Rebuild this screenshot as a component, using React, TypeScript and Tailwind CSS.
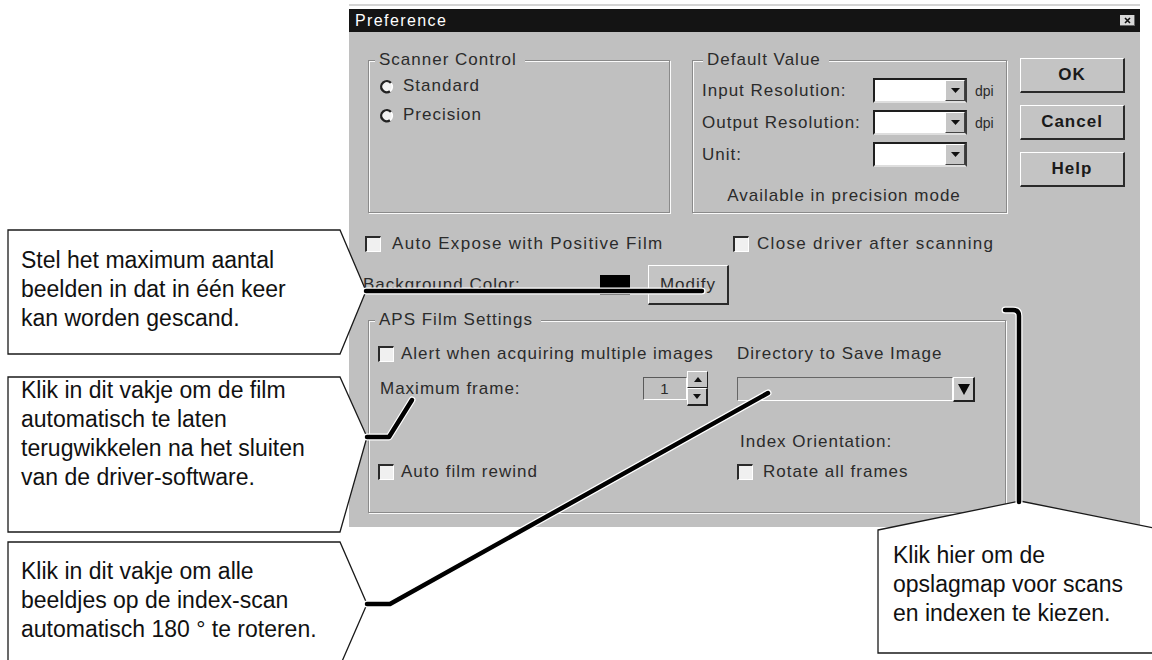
import React from "react";

function Check() {
    return (
        <span className="inline-block w-[16px] h-[16px] shrink-0 bg-[#f0f0f0] border-t-2 border-l-2 border-r border-b border-t-[#2a2a2a] border-l-[#2a2a2a] border-r-white border-b-white" />
    );
}

function Radio() {
    return (
        <svg width="15" height="15" viewBox="0 0 15 15" className="shrink-0">
            <circle cx="7.5" cy="7.5" r="6" fill="#f2f2f2" />
            <path d="M12 4 A5.6 5.6 0 1 0 11 12.3" stroke="#222" strokeWidth="2.4" fill="none" />
            <path d="M11 12.3 A5.6 5.6 0 0 0 12 4" stroke="#ffffff" strokeWidth="1.5" fill="none" />
        </svg>
    );
}

function Group({ label, labelLeft, className, children }: { label: string; labelLeft: string; className: string; children?: React.ReactNode }) {
    return (
        <div className={`relative border border-[#8a8a8a] shadow-[inset_1px_1px_0_#fafafa,1px_1px_0_#fafafa] ${className}`}>
            <span className={`absolute -top-[11px] ${labelLeft} bg-[#c0c0c0] pl-[4px] pr-[8px] leading-[20px] whitespace-nowrap`}>
                {label}
            </span>
            {children}
        </div>
    );
}

function Combo() {
    return (
        <div className="w-[94px] h-[25px] flex bg-white border-2 border-t-[#1e1e1e] border-l-[#1e1e1e] border-r-[#3a3a3a] border-b-[#dedede]">
            <div className="flex-1" />
            <div className="w-[20px] h-full bg-[#c6c6c6] border-t border-l border-t-white border-l-white border-r border-b border-r-[#444] border-b-[#444] flex items-center justify-center">
                <svg width="9" height="5" viewBox="0 0 9 5">
                    <polygon points="0,0 9,0 4.5,5" fill="#111" />
                </svg>
            </div>
        </div>
    );
}

function Btn({ children, className }: { children: React.ReactNode; className: string }) {
    return (
        <div className={`flex items-center justify-center bg-[#c4c4c4] border-t border-l border-t-white border-l-white border-r-2 border-b-2 border-r-[#2a2a2a] border-b-[#2a2a2a] ${className}`}>
            {children}
        </div>
    );
}

function Spin() {
    return (
        <div className="flex items-center">
            <div className="w-[44px] h-[23px] flex items-center justify-center text-[15px] border-t border-l border-t-[#5a5a5a] border-l-[#5a5a5a] border-r border-b border-r-white border-b-white">
                1
            </div>
            <div className="w-[21px] flex flex-col">
                <div className="h-[17px] flex items-center justify-center bg-[#c4c4c4] border-t border-l border-t-white border-l-white border-r border-b border-r-[#222] border-b-[#222]">
                    <svg width="8" height="5" viewBox="0 0 8 5">
                        <polygon points="0,5 8,5 4,0" fill="#111" />
                    </svg>
                </div>
                <div className="h-[18px] flex items-center justify-center bg-[#c4c4c4] border-t border-l border-t-white border-l-white border-r-2 border-b-2 border-r-[#222] border-b-[#222]">
                    <svg width="8" height="5" viewBox="0 0 8 5">
                        <polygon points="0,0 8,0 4,5" fill="#111" />
                    </svg>
                </div>
            </div>
        </div>
    );
}

function Dialog() {
    return (
        <div className="ml-[349px] pt-[4px] w-[791px]">
            <div className="h-[2px] bg-[#d4d4d4]" />
            <div className="h-[3px]" />
            <div className="h-[23px] bg-[#141414] flex items-center justify-between pl-[6px] pr-[5px]">
                <span className="text-white text-[16px] tracking-[1.4px]">Preference</span>
                <div className="w-[15px] h-[11px] bg-[#d8d8d8] border-r border-b border-[#666] flex items-center justify-center">
                    <svg width="7" height="7" viewBox="0 0 7 7">
                        <path d="M1 1 L6 6 M6 1 L1 6" stroke="#111" strokeWidth="1.6" />
                    </svg>
                </div>
            </div>

            <div className="h-[495px] bg-[#c0c0c0] pl-[16px] pt-[28px] text-[17px] leading-[20px] tracking-[1px] text-[#2b2b2b]">
                {/* top row */}
                <div className="ml-[3px] flex items-start">
                    <Group label="Scanner Control" labelLeft="left-[6px]" className="w-[302px] h-[153px] pt-[15px] pl-[10px]">
                        <div className="h-[20px] flex items-center gap-[9px]">
                            <Radio />
                            Standard
                        </div>
                        <div className="mt-[9px] h-[20px] flex items-center gap-[9px]">
                            <Radio />
                            Precision
                        </div>
                    </Group>

                    <Group label="Default Value" labelLeft="left-[10px]" className="ml-[22px] w-[315px] h-[153px] pt-[17px] pl-[9px]">
                        <div className="h-[25px] flex items-center">
                            <span className="w-[171px] whitespace-nowrap">Input Resolution:</span>
                            <Combo />
                            <span className="ml-[8px] text-[14px] tracking-normal">dpi</span>
                        </div>
                        <div className="mt-[7px] h-[25px] flex items-center">
                            <span className="w-[171px] whitespace-nowrap">Output Resolution:</span>
                            <Combo />
                            <span className="ml-[8px] text-[14px] tracking-normal">dpi</span>
                        </div>
                        <div className="mt-[7px] h-[25px] flex items-center">
                            <span className="w-[171px]">Unit:</span>
                            <Combo />
                        </div>
                        <div className="mt-[19px] w-[284px] text-center whitespace-nowrap">Available in precision mode</div>
                    </Group>

                    <div className="ml-[13px] -mt-[2px] w-[105px] flex flex-col gap-[12px] font-bold text-[#1a1a1a]">
                        <Btn className="h-[35px]">OK</Btn>
                        <Btn className="h-[35px]">Cancel</Btn>
                        <Btn className="h-[35px]">Help</Btn>
                    </div>
                </div>

                {/* checkboxes */}
                <div className="mt-[21px] h-[20px] flex items-center">
                    <div className="w-[368px] flex items-center gap-[11px] whitespace-nowrap tracking-[1.3px]">
                        <Check />
                        Auto Expose with Positive Film
                    </div>
                    <div className="flex items-center gap-[8px] whitespace-nowrap tracking-[1.3px]">
                        <Check />
                        Close driver after scanning
                    </div>
                </div>

                {/* background colour */}
                <div className="mt-[11px] h-[40px] flex items-center">
                    <span className="-ml-[2px] w-[237px] whitespace-nowrap">Background Color:</span>
                    <span className="w-[30px] h-[20px] bg-black" />
                    <Btn className="ml-[18px] w-[81px] h-[40px]">Modify</Btn>
                </div>

                {/* APS */}
                <Group label="APS Film Settings" labelLeft="left-[6px]" className="mt-[15px] ml-[3px] w-[638px] h-[193px] flex pt-[23px] pl-[9px]">
                    <div className="w-[359px] flex flex-col">
                        <div className="h-[20px] flex items-center gap-[7px] whitespace-nowrap">
                            <Check />
                            Alert when acquiring multiple images
                        </div>
                        <div className="mt-[7px] h-[35px] flex items-center">
                            <span className="w-[265px] pl-[2px]">Maximum frame:</span>
                            <Spin />
                        </div>
                        <div className="mt-[56px] h-[20px] flex items-center gap-[7px]">
                            <Check />
                            Auto film rewind
                        </div>
                    </div>
                    <div className="flex flex-col">
                        <div className="h-[20px] flex items-center whitespace-nowrap">Directory to Save Image</div>
                        <div className="mt-[13px] w-[238px] h-[25px] flex">
                            <div className="flex-1 h-[24px] border-t border-l border-t-[#666] border-l-[#666] border-r border-b border-r-white border-b-white" />
                            <div className="w-[22px] h-[25px] bg-[#c8c8c8] border-t border-l border-t-white border-l-white border-r-2 border-b-2 border-r-[#222] border-b-[#222] flex items-center justify-center">
                                <svg width="12" height="11" viewBox="0 0 12 11">
                                    <polygon points="0,0 12,0 6,11" fill="#0a0a0a" />
                                </svg>
                            </div>
                        </div>
                        <div className="mt-[30px] h-[20px] flex items-center pl-[3px] whitespace-nowrap">Index Orientation:</div>
                        <div className="mt-[10px] h-[20px] flex items-center gap-[10px] whitespace-nowrap">
                            <Check />
                            Rotate all frames
                        </div>
                    </div>
                </Group>
            </div>
        </div>
    );
}

const leaders = [
    "M366 291 H702",
    "M367 437 H389 L412 400",
    "M367 604 H390 L768 393",
    "M1019 502 V316 Q1019 310 1013 310 H1005",
];

function Overlay() {
    return (
        <svg className="absolute left-0 top-0 pointer-events-none" width="1152" height="660" viewBox="0 0 1152 660">
            <g fill="#fff" stroke="#1a1a1a" strokeWidth="1.3" strokeLinejoin="miter">
                <polygon points="8,230 340,230 366,291 340,354 8,354" />
                <polygon points="8,377 340,377 367,437 340,532 8,532" />
                <polygon points="8,542 340,542 367,604 340,666 8,666" />
                <polygon points="878,530 1020,501 1164,530 1164,653 878,653" />
            </g>
            {leaders.map((d) => (
                <path key={d + "w"} d={d} fill="none" stroke="#fff" strokeWidth="7" strokeLinecap="round" strokeLinejoin="round" />
            ))}
            {leaders.map((d) => (
                <path key={d} d={d} fill="none" stroke="#000" strokeWidth="4.5" strokeLinecap="round" strokeLinejoin="round" />
            ))}
        </svg>
    );
}

function Note({ className, children }: { className: string; children: React.ReactNode }) {
    return <div className={`absolute text-[23px] leading-[29px] text-[#111] whitespace-nowrap ${className}`}>{children}</div>;
}

export default function App() {
    return (
        <div className="relative w-[1152px] h-[660px] overflow-hidden bg-white font-['Liberation_Sans',Arial,sans-serif]">
            <Dialog />
            <Overlay />

            <Note className="left-[21px] top-[246px]">
                Stel het maximum aantal
                <br />
                beelden in dat in één keer
                <br />
                kan worden gescand.
            </Note>
            <Note className="left-[21px] top-[376px]">
                Klik in dit vakje om de film
                <br />
                automatisch te laten
                <br />
                terugwikkelen na het sluiten
                <br />
                van de driver-software.
            </Note>
            <Note className="left-[21px] top-[557px]">
                Klik in dit vakje om alle
                <br />
                beeldjes op de index-scan
                <br />
                automatisch 180 ° te roteren.
            </Note>
            <Note className="left-[893px] top-[541px]">
                Klik hier om de
                <br />
                opslagmap voor scans
                <br />
                en indexen te kiezen.
            </Note>
        </div>
    );
}
